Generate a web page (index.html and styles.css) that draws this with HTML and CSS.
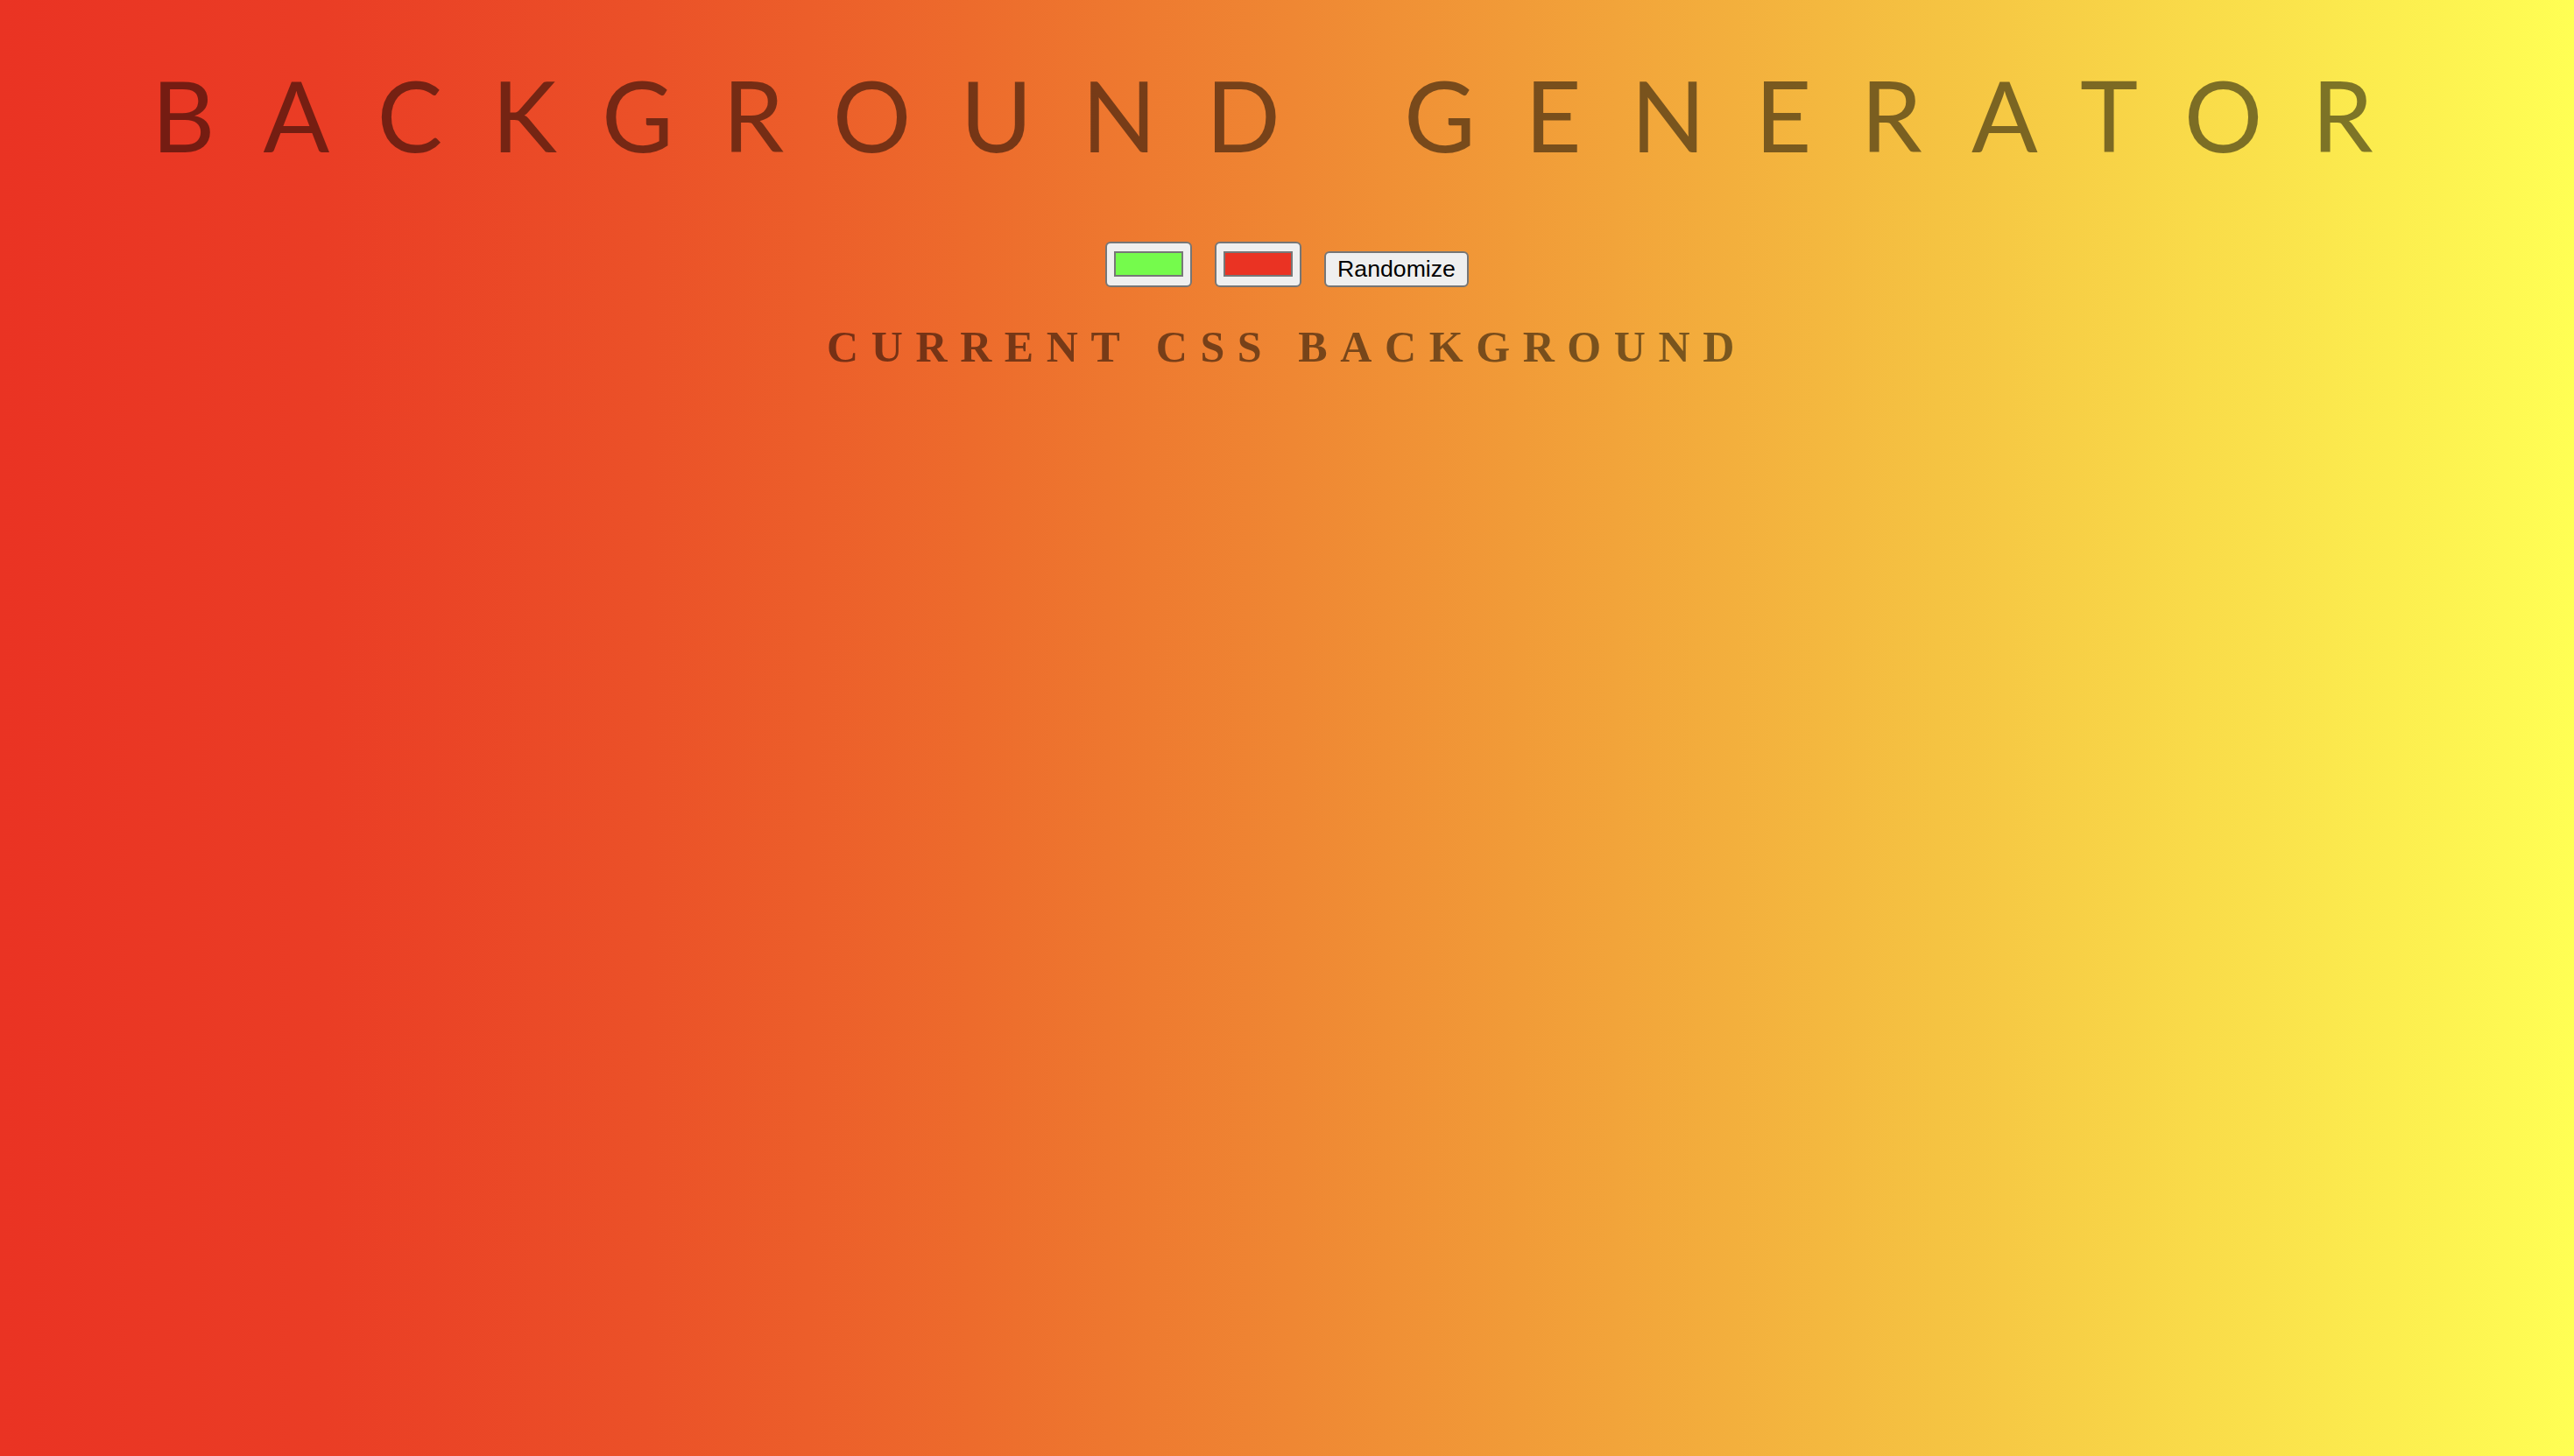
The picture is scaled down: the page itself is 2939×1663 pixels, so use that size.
FILE: index.html
```html
<!DOCTYPE html>
<html lang="en">
<head>
<meta charset="utf-8">
<title>Gradient Background</title>
<link rel="stylesheet" href="styles.css">
</head>
<body class="page">
  <h1 class="title">Background Generator</h1>
  <div class="controls">
    <input class="color-input" type="color" name="color1" value="#75fb4c">
    <input class="color-input" type="color" name="color2" value="#ea3323">
    <button class="random-btn" type="button">Randomize</button>
  </div>
  <h3 class="subtitle">Current CSS Background</h3>
</body>
</html>
```
FILE: styles.css
```css
html {
  min-height: 100%;
  background: linear-gradient(to right,
    rgb(234, 51, 35) 0%,
    rgb(234, 61, 37) 12.55%,
    rgb(235, 81, 40) 25.1%,
    rgb(237, 107, 44) 37.65%,
    rgb(239, 135, 51) 50.2%,
    rgb(242, 164, 58) 62.75%,
    rgb(245, 195, 66) 75.3%,
    rgb(250, 225, 75) 87.84%,
    rgb(255, 255, 84) 100%);
}

.page {
  margin: 0;
  padding-top: 75px;
  min-height: 1663px;
  box-sizing: border-box;
  color: rgba(0, 0, 0, 0.5);
  text-align: center;
  text-transform: uppercase;
}

.title {
  margin: 0;
  font-family: Lato, "Open Sans", sans-serif;
  font-weight: 400;
  font-size: 112px;
  line-height: 112px;
  letter-spacing: 56.2px;
  color: rgba(0, 0, 0, 0.5);
}

.controls {
  margin-top: 88px;
  display: flex;
  justify-content: center;
  align-items: flex-end;
  gap: 26px;
  height: 53px;
}

.color-input {
  -webkit-appearance: none;
  appearance: none;
  box-sizing: border-box;
  width: 99px;
  height: 52px;
  margin: 0;
  padding: 9px 8px 10px 8px;
  border: 2px solid #767676;
  border-radius: 6px;
  background: #efefef;
  cursor: pointer;
}

.color-input::-webkit-color-swatch-wrapper {
  padding: 0;
}

.color-input::-webkit-color-swatch {
  border: 2px solid #777777;
  border-radius: 0;
}

.random-btn {
  box-sizing: border-box;
  height: 41px;
  margin: 0;
  padding: 0 13px;
  border: 2px solid #767676;
  border-radius: 6px;
  background: #efefef;
  color: #000;
  font-family: "Liberation Sans", Arial, sans-serif;
  font-size: 26.67px;
  line-height: 1;
  letter-spacing: normal;
  text-transform: none;
}

.subtitle {
  margin: 43px 0 0;
  font-family: "Liberation Serif", "Times New Roman", serif;
  font-weight: 700;
  font-size: 50px;
  line-height: 50px;
  letter-spacing: 14.6px;
  color: rgba(0, 0, 0, 0.5);
}
```
